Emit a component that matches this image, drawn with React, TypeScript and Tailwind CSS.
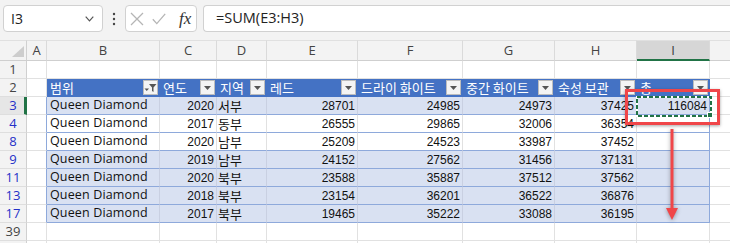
import React from 'react';

const colW = ['w-[20px]', 'w-[113px]', 'w-[57px]', 'w-[50px]', 'w-[91px]', 'w-[105px]', 'w-[92px]', 'w-[82px]', 'w-[73px]', 'w-[70px]'];
const letters = ['A', 'B', 'C', 'D', 'E', 'F', 'G', 'H', 'I', ''];
const headers = ['범위', '연도', '지역', '레드', '드라이 화이트', '중간 화이트', '숙성 보관', '총'];

const rows = [
  { n: '3', band: true, v: ['Queen Diamond', '2020', '서부', '28701', '24985', '24973', '37425', '116084'] },
  { n: '4', band: false, v: ['Queen Diamond', '2017', '동부', '26555', '29865', '32006', '36354', ''] },
  { n: '8', band: false, v: ['Queen Diamond', '2020', '남부', '25209', '24523', '33987', '37452', ''] },
  { n: '9', band: true, v: ['Queen Diamond', '2019', '남부', '24152', '27562', '31456', '37131', ''] },
  { n: '11', band: true, v: ['Queen Diamond', '2020', '북부', '23588', '35887', '37512', '37562', ''] },
  { n: '13', band: true, v: ['Queen Diamond', '2018', '북부', '23154', '36201', '36522', '36876', ''] },
  { n: '17', band: true, v: ['Queen Diamond', '2017', '북부', '19465', '35222', '33088', '36195', ''] },
];

const numFont = "font-['Liberation_Sans',sans-serif] text-[12px] leading-none text-[#111]";
const txtFont = "font-['Open_Sans',sans-serif] text-[12.5px] leading-none tracking-[0.15px] text-[#111]";
const krFont = "font-['Noto_Sans_CJK_KR',sans-serif] text-[13px] leading-none text-[#111]";

function DropBtn({ filter }: { filter?: boolean }) {
  return (
    <div className="w-[15px] h-[15px] shrink-0 box-border border border-[#bdbdbd] bg-[#f4f4f4] flex items-center justify-center">
      {filter ? (
        <svg width="13" height="11" viewBox="0 0 13 11">
          <path d="M0.5 6.5h4.5L2.75 9z" fill="#555" />
          <path d="M5 2h7.5l-3 3.4v4.6l-1.5-1.1v-3.5z" fill="#555" />
        </svg>
      ) : (
        <svg width="7" height="4" viewBox="0 0 7 4">
          <path d="M0 0h7L3.5 4z" fill="#555" />
        </svg>
      )}
    </div>
  );
}

function RowHead({ n, blue, active, h }: { n: string; blue?: boolean; active?: boolean; h: string }) {
  return (
    <div
      className={
        h +
        ' w-[27px] shrink-0 box-border border-b border-b-[#dedede] flex items-center justify-center text-[13px] leading-none font-[\'Open_Sans\',sans-serif] ' +
        (active ? 'border-r-[3px] border-r-[#217346] bg-[#e6e6e6] pl-[2px] ' : 'border-r border-r-[#d0d0d0] bg-[#f3f3f3] ') +
        (blue ? 'text-[#2430c8]' : 'text-[#444]')
      }
    >
      {n}
    </div>
  );
}

function PlainRow({ n, h }: { n: string; h: string }) {
  return (
    <div className="flex">
      <RowHead n={n} h={h} />
      {colW.map((w, i) => (
        <div key={i} className={w + ' ' + h + ' shrink-0 box-border border-r border-b border-[#e1e1e1] bg-white'} />
      ))}
    </div>
  );
}

export default function App() {
  return (
    <div className="w-[730px] h-[243px] overflow-hidden bg-white relative font-['Open_Sans',sans-serif]">
      {/* Formula bar */}
      <div className="h-[40px] bg-[#f3f3f3] flex items-start pt-[5px] pl-[3px]">
        <div className="w-[100px] h-[27px] shrink-0 box-border border border-[#d1d1d1] rounded-[4px] bg-white flex items-center justify-between pl-[7px] pr-[8px]">
          <span className="text-[14px] text-[#222] leading-none">I3</span>
          <svg width="9" height="6" viewBox="0 0 9 6">
            <path d="M0.7 0.7 4.5 4.8 8.3 0.7" fill="none" stroke="#555" strokeWidth="1.2" />
          </svg>
        </div>
        <div className="w-[22px] h-[27px] shrink-0 flex items-center justify-center">
          <svg width="4" height="14" viewBox="0 0 4 14">
            <circle cx="2" cy="2" r="1.2" fill="#444" />
            <circle cx="2" cy="7" r="1.2" fill="#444" />
            <circle cx="2" cy="12" r="1.2" fill="#444" />
          </svg>
        </div>
        <div className="w-[72px] h-[27px] shrink-0 box-border border border-[#d1d1d1] rounded-[4px] bg-white flex items-center pl-[4px]">
          <svg width="14" height="14" viewBox="0 0 14 14" className="shrink-0">
            <path d="M1 1 13 13M13 1 1 13" stroke="#b5b5b5" strokeWidth="1.3" />
          </svg>
          <svg width="14" height="12" viewBox="0 0 14 12" className="shrink-0 ml-[8px]">
            <path d="M0.8 6.2 4.8 10.6 13.2 0.8" fill="none" stroke="#b5b5b5" strokeWidth="1.3" />
          </svg>
          <span className="ml-[13px] font-['Liberation_Serif',serif] italic text-[17px] text-[#333] leading-none">fx</span>
        </div>
        <div className="ml-[6px] flex-1 h-[27px] box-border border border-r-0 border-[#d1d1d1] rounded-l-[4px] bg-white flex items-center pl-[12px]">
          <span className="text-[14.5px] text-[#222] leading-none">=SUM(E3:H3)</span>
        </div>
      </div>

      {/* Grid */}
      <div className="flex flex-col w-[780px]">
        {/* Column headers */}
        <div className="flex">
          <div className="w-[27px] h-[21px] shrink-0 box-border border-r border-b border-r-[#d0d0d0] border-b-[#cfcfcf] bg-[#f3f3f3] border-t border-t-[#e0e0e0] flex items-end justify-end pr-[2px] pb-[3px]">
            <svg width="12" height="11" viewBox="0 0 12 11">
              <path d="M12 0V11H0z" fill="#cdcdcd" />
            </svg>
          </div>
          {colW.map((w, i) => (
            <div
              key={i}
              className={
                w +
                ' h-[21px] shrink-0 box-border border-r border-t border-t-[#e0e0e0] border-r-[#dadada] flex items-center justify-center text-[13px] leading-none ' +
                (i === 8 ? 'border-b-2 border-b-[#217346] bg-[#d6d6d6] text-[#3b3b3b]' : 'border-b border-b-[#cfcfcf] bg-[#f3f3f3] text-[#444]')
              }
            >
              {letters[i]}
            </div>
          ))}
        </div>

        <PlainRow n="1" h="h-[18px]" />

        {/* Table header row */}
        <div className="flex">
          <RowHead n="2" h="h-[18px]" />
          {colW.map((w, i) => {
            if (i === 0 || i === 9)
              return <div key={i} className={w + ' h-[18px] shrink-0 box-border border-r border-b border-[#e1e1e1] bg-white'} />;
            return (
              <div
                key={i}
                className={w + ' h-[18px] shrink-0 box-border border-r border-b border-[#4472c4] bg-[#4472c4] flex items-center justify-between pl-[3px] pr-[1px] overflow-hidden'}
              >
                <span className="font-['Noto_Sans_CJK_KR',sans-serif] text-[13px] text-white whitespace-nowrap leading-none">{headers[i - 1]}</span>
                <DropBtn filter={i === 1} />
              </div>
            );
          })}
        </div>

        {/* Data rows */}
        {rows.map((r) => (
          <div key={r.n} className="flex">
            <RowHead n={r.n} h="h-[18px]" blue active={r.n === '3'} />
            {colW.map((w, i) => {
              if (i === 0)
                return <div key={i} className={w + ' h-[18px] shrink-0 box-border border-r border-b border-r-[#8ea9db] border-b-[#e1e1e1] bg-white'} />;
              if (i === 9)
                return <div key={i} className={w + ' h-[18px] shrink-0 box-border border-r border-b border-[#e1e1e1] bg-white'} />;
              const val = r.v[i - 1];
              const bg = r.band ? 'bg-[#d9e1f2] ' : 'bg-white ';
              const br = i === 8 ? 'border-r-[#8ea9db] ' : r.band ? 'border-r-[#c9d0e2] ' : 'border-r-[#e1e1e1] ';
              const content =
                i === 1 ? (
                  <span className={txtFont + ' pl-[3px] whitespace-nowrap'}>{val}</span>
                ) : i === 3 ? (
                  <span className={krFont + ' pl-[1px] whitespace-nowrap'}>{val}</span>
                ) : (
                  <span className={numFont + ' ml-auto pr-[2px] whitespace-nowrap'}>{val}</span>
                );
              return (
                <div key={i} className={w + ' h-[18px] shrink-0 box-border border-r border-b border-b-[#8ea9db] flex items-center ' + bg + br}>
                  {content}
                </div>
              );
            })}
          </div>
        ))}

        <PlainRow n="39" h="h-[18px]" />
        <PlainRow n="" h="h-[18px]" />
      </div>

      {/* Active cell selection (marching ants) */}
      <svg className="absolute left-[636px] top-[96px]" width="78" height="24" viewBox="0 0 78 24">
        <rect x="1" y="1" width="74" height="19" fill="none" stroke="#ffffff" strokeWidth="2" />
        <rect x="1" y="1" width="74" height="19" fill="none" stroke="#217346" strokeWidth="2" strokeDasharray="4 2" />
        <rect x="71.5" y="16.5" width="5" height="5" fill="#217346" stroke="#ffffff" strokeWidth="1" />
      </svg>

      {/* Red annotation box */}
      <div className="absolute left-[625px] top-[89px] w-[95px] h-[36px] box-border border-[3px] border-[#f04649] shadow-[0_1px_3px_rgba(0,0,0,0.35)]" />

      {/* Red arrow */}
      <svg className="absolute left-[661px] top-[126px] drop-shadow-[0_1px_2px_rgba(0,0,0,0.35)]" width="22" height="98" viewBox="0 0 22 98">
        <path d="M11 3V84" stroke="#f04649" strokeWidth="3" />
        <path d="M5 82H17L11 94z" fill="#f04649" />
      </svg>
    </div>
  );
}
